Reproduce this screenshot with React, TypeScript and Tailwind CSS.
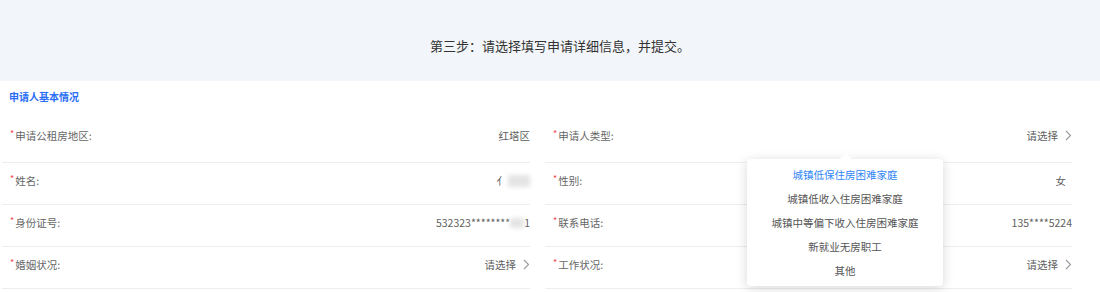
import { ReactNode } from 'react';

const Chevron = () => (
  <svg width="7" height="11" viewBox="0 0 7 11" className="ml-[7px]">
    <path d="M1 1l4.5 4.5L1 10" fill="none" stroke="#9a9a9a" strokeWidth="1.1" />
  </svg>
);

const Row = ({
  label,
  first,
  children,
}: {
  label: string;
  first?: boolean;
  children: ReactNode;
}) => (
  <div
    className={
      first
        ? 'flex h-[42px] items-center justify-between border-b border-[#eeeeee] pb-[12px] pl-[8px]'
        : 'flex h-[42px] items-center justify-between border-b border-[#eeeeee] pb-[6px] pl-[8px]'
    }
  >
    <div className="flex items-center text-[#666666]">
      <span className="mt-[-3px] mr-[1px] text-[9px] text-[#f04a4a]">*</span>
      <span>{label}</span>
    </div>
    <div className="flex items-center text-[#606060]">{children}</div>
  </div>
);

const options = [
  '城镇低保住房困难家庭',
  '城镇低收入住房困难家庭',
  '城镇中等偏下收入住房困难家庭',
  '新就业无房职工',
  '其他',
];

const App = () => {
  return (
    <div
      className="relative h-[292px] w-[1100px] overflow-hidden bg-white text-[10.5px]"
      style={{ fontFamily: '"Noto Sans CJK SC", "Noto Sans", sans-serif' }}
    >
      <div className="flex h-[81px] items-center justify-center bg-[#f2f5f9] pt-[10px] pl-[20px] text-[13px] text-[#333333]">
        第三步：请选择填写申请详细信息，并提交。
      </div>
      <div className="flex h-[40px] items-center pb-[10px] pl-[9px] text-[10px] font-bold text-[#2a6ef5]">
        申请人基本情况
      </div>
      <div className="ml-[2px] grid grid-cols-[539px_535px] gap-x-[4px]">
        <div className="pr-[11px]">
          <Row label="申请公租房地区:" first>
            红塔区
          </Row>
          <Row label="姓名:">
            <span>亻</span>
            <span className="ml-[1px] h-[12px] w-[22px] bg-[#e4e4e4] blur-[2px]" />
          </Row>
          <Row label="身份证号:">
            <span>532323********</span>
            <span className="h-[10px] w-[14px] bg-[#e4e4e4] blur-[2px]" />
            <span>1</span>
          </Row>
          <Row label="婚姻状况:">
            请选择
            <Chevron />
          </Row>
        </div>
        <div className="pr-[8px]">
          <Row label="申请人类型:" first>
            请选择
            <Chevron />
          </Row>
          <Row label="性别:">
            <span className="mr-[6px]">女</span>
          </Row>
          <Row label="联系电话:">135****5224</Row>
          <Row label="工作状况:">
            请选择
            <Chevron />
          </Row>
        </div>
      </div>

      <div className="absolute top-[159px] left-[747px] w-[196px] rounded-[4px] bg-white pt-[4px] pb-[3px] shadow-[0_2px_12px_rgba(0,0,0,0.16)]">
        <svg
          width="14"
          height="7"
          viewBox="0 0 14 7"
          className="absolute top-[-6px] left-[92px]"
        >
          <path d="M0 7L7 0l7 7z" fill="#ffffff" />
        </svg>
        {options.map((option, i) => (
          <div
            key={option}
            className={
              i === 0
                ? 'flex h-[24px] items-center justify-center text-[#2f86f6]'
                : 'flex h-[24px] items-center justify-center text-[#555555]'
            }
          >
            {option}
          </div>
        ))}
      </div>
    </div>
  );
};

export default App;
